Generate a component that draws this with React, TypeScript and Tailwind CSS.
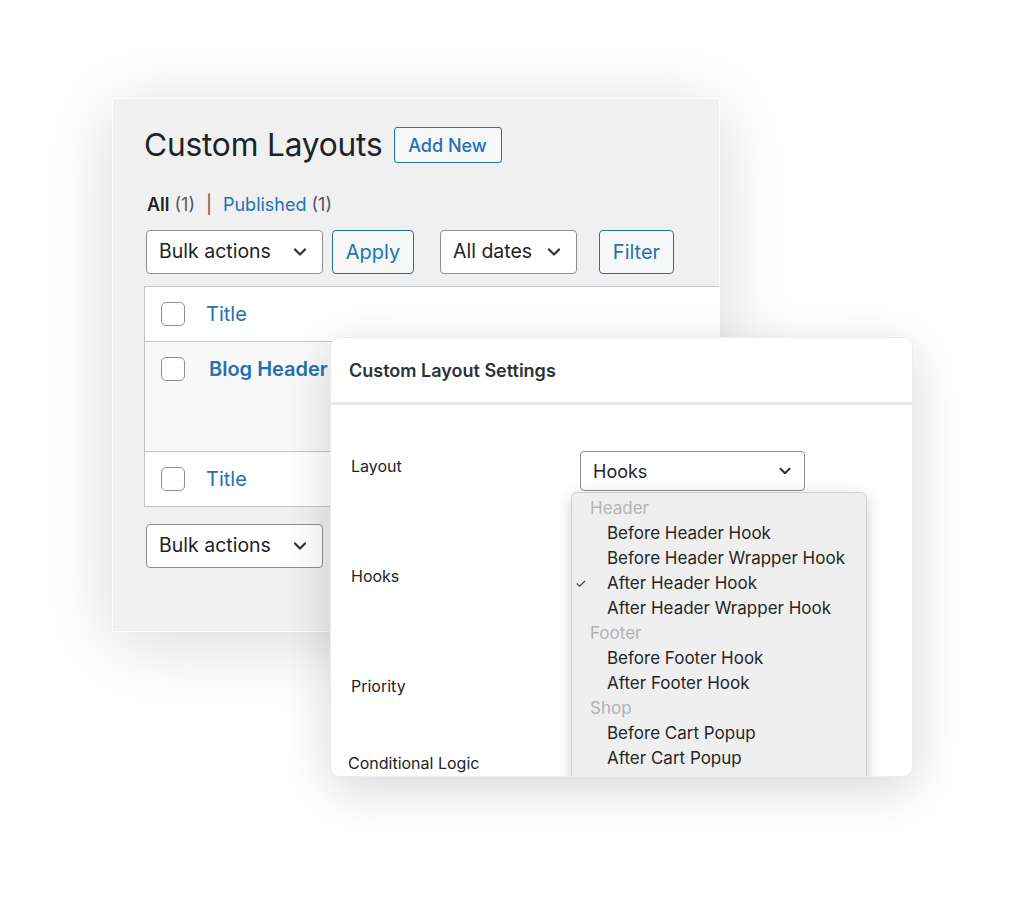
import React from "react";

const font = { fontFamily: "Inter, 'Noto Sans', sans-serif" };

function Chevron({ className = "" }: { className?: string }) {
  return (
    <svg viewBox="0 0 20 20" className={className} fill="none" stroke="currentColor" strokeWidth="2.2" strokeLinecap="round" strokeLinejoin="round">
      <path d="M5 7.5l5 5 5-5" />
    </svg>
  );
}

function Select({ label, width }: { label: string; width: string }) {
  return (
    <div className={`${width} h-[44px] bg-white border border-[#8c8f94] rounded-[4px] flex items-center justify-between pl-[12px] pr-[12px] text-[19.5px] text-[#1d2327]`}>
      <span>{label}</span>
      <Chevron className="w-[20px] h-[20px] text-[#2c3338]" />
    </div>
  );
}

function Btn({ label, width }: { label: string; width: string }) {
  return (
    <div className={`${width} h-[44px] bg-[#f6f7f7] border border-[#2271b1] rounded-[4px] flex items-center justify-center text-[20px] text-[#2271b1]`}>
      {label}
    </div>
  );
}

function Check() {
  return <div className="w-[24px] h-[24px] shrink-0 rounded-[5px] border border-[#8c8f94] bg-white" />;
}

const hooks: { t: string; g?: boolean; c?: boolean }[] = [
  { t: "Header", g: true },
  { t: "Before Header Hook" },
  { t: "Before Header Wrapper Hook" },
  { t: "After Header Hook", c: true },
  { t: "After Header Wrapper Hook" },
  { t: "Footer", g: true },
  { t: "Before Footer Hook" },
  { t: "After Footer Hook" },
  { t: "Shop", g: true },
  { t: "Before Cart Popup" },
  { t: "After Cart Popup" },
];

export default function App() {
  return (
    <div className="relative w-[1024px] h-[903px] bg-white overflow-hidden" style={font}>
      <div className="pt-[98px] pl-[112px]">
        <div className="w-[608px] h-[534px] bg-[#f0f0f1] border border-white shadow-[0_10px_70px_rgba(0,0,0,0.15)] overflow-hidden pl-[31px]">
          <div className="mt-[28px] flex items-center h-[36px]">
            <h1 className="text-[31.7px] leading-[36px] text-[#1d2327] tracking-[-0.2px]">Custom Layouts</h1>
            <div className="ml-[11px] w-[108px] h-[36px] border border-[#2271b1] rounded-[3px] bg-[#f6f7f7] flex items-center justify-center text-[18px] font-medium text-[#2271b1]">
              Add New
            </div>
          </div>
          <div className="mt-[29px] h-[24px] flex items-center text-[18px] text-[#50575e] pl-[3px]">
            <span className="font-semibold text-[#1d2327]">All</span>
            <span className="ml-[5px]">(1)</span>
            <span className="mx-[11px] text-[#50575e]">|</span>
            <span className="text-[#2271b1]">Published</span>
            <span className="ml-[5px]">(1)</span>
          </div>
          <div className="mt-[14px] flex items-center pl-[2px]">
            <Select label="Bulk actions" width="w-[177px]" />
            <div className="ml-[9px]"><Btn label="Apply" width="w-[82px]" /></div>
            <div className="ml-[26px]"><Select label="All dates" width="w-[137px]" /></div>
            <div className="ml-[22px]"><Btn label="Filter" width="w-[75px]" /></div>
          </div>
          <div className="mt-[12px] w-[620px] border border-[#c3c4c7] bg-white">
            <div className="h-[55px] flex items-center pl-[16px] border-b border-[#c3c4c7]">
              <Check />
              <span className="ml-[21px] text-[20px] text-[#2271b1]">Title</span>
            </div>
            <div className="h-[110px] bg-[#f9f9f9] pl-[16px] pt-[15px] flex items-start border-b border-[#c3c4c7]">
              <Check />
              <span className="ml-[24px] text-[20px] leading-[24px] font-semibold text-[#2271b1]">Blog Header</span>
            </div>
            <div className="h-[54px] flex items-center pl-[16px]">
              <Check />
              <span className="ml-[21px] text-[20px] text-[#2271b1]">Title</span>
            </div>
          </div>
          <div className="mt-[17px] pl-[2px]">
            <Select label="Bulk actions" width="w-[177px]" />
          </div>
        </div>
      </div>

      {/* Settings card */}
      <div className="absolute left-[330px] top-[337px] w-[583px] h-[440px] bg-white rounded-[10px] border border-[#ececec] shadow-[0_12px_50px_rgba(0,0,0,0.16)] overflow-hidden">
        <div className="h-[67px] flex items-center pl-[18px] border-b-[3px] border-[#e7e7e7]">
          <span className="text-[18px] font-semibold text-[#2c3338]">Custom Layout Settings</span>
        </div>
        <div className="relative pl-[20px]">
          <div className="h-[46px]" />
          <div className="flex items-center h-[40px]">
            <span className="w-[229px] text-[16px] text-[#1d2327] -mt-[11px]">Layout</span>
            <div className="w-[225px] h-[40px] border border-[#8c8f94] rounded-[4px] flex items-center justify-between pl-[12px] pr-[10px] text-[18px] text-[#1d2327]">
              <span className="mt-[1px]">Hooks</span>
              <Chevron className="w-[18px] h-[18px] text-[#2c3338]" />
            </div>
          </div>
          <div className="mt-[65px] h-[40px] flex items-center text-[16px] text-[#1d2327]">Hooks</div>
          <div className="mt-[70px] h-[40px] flex items-center text-[16px] text-[#1d2327]">Priority</div>
          <div className="mt-[37px] h-[40px] flex items-center text-[16px] text-[#1d2327] -ml-[3px]">Conditional Logic</div>

          {/* dropdown */}
          <div className="absolute left-[240px] top-[87px] w-[296px] h-[300px] bg-[#efefef] border border-[#cfcfcf] rounded-t-[6px] shadow-[0_4px_16px_rgba(0,0,0,0.18)] pt-[3px]">
            {hooks.map((h) => (
              <div key={h.t} className="relative h-[25px] flex items-center text-[17px]">
                {h.c && <span className="absolute left-[3px] text-[13px] text-[#333]">✓</span>}
                <span className={h.g ? "pl-[18px] text-[#b3b3b3]" : "pl-[35px] text-[#262626]"}>{h.t}</span>
              </div>
            ))}
          </div>
        </div>
      </div>
    </div>
  );
}
